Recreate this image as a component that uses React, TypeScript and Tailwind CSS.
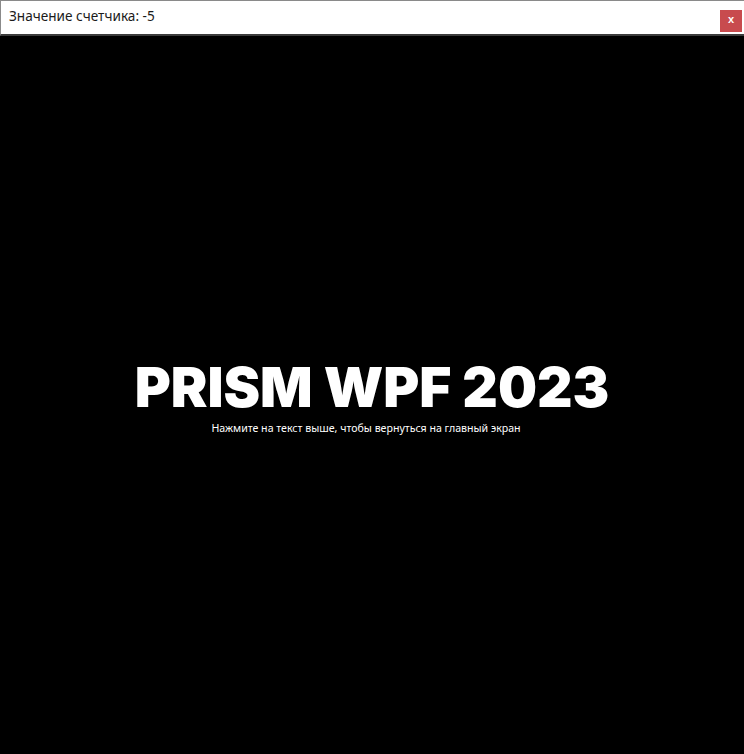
import React from "react";

export default function App() {
  return (
    <div className="w-[744px] h-[754px] flex flex-col bg-black overflow-hidden">
      <div className="h-[36px] shrink-0 bg-white border-t border-l border-[#8a8a8a] border-b-[2px] border-b-[#3c3c3c] flex items-center justify-between pl-[8px] pr-[2px]">
        <span className="text-[13.6px] text-[#1a1a1a] leading-none mb-[3px] font-['Noto_Sans',sans-serif]">
          Значение счетчика: -5
        </span>
        <div className="w-[22px] h-[22px] mt-[6px] bg-[#c84b4e] flex items-center justify-center text-white text-[11px] font-bold leading-none pb-[2px] font-['Liberation_Sans',sans-serif]">
          x
        </div>
      </div>
      <div className="flex-1 flex flex-col items-center pt-[324px]">
        <div className="text-white text-[55px] font-black leading-none font-['Inter',sans-serif]">
          PRISM WPF 2023
        </div>
        <div className="text-white text-[10.6px] mt-[8px] leading-none pr-[12px] font-['Noto_Sans',sans-serif]">
          Нажмите на текст выше, чтобы вернуться на главный экран
        </div>
      </div>
    </div>
  );
}
